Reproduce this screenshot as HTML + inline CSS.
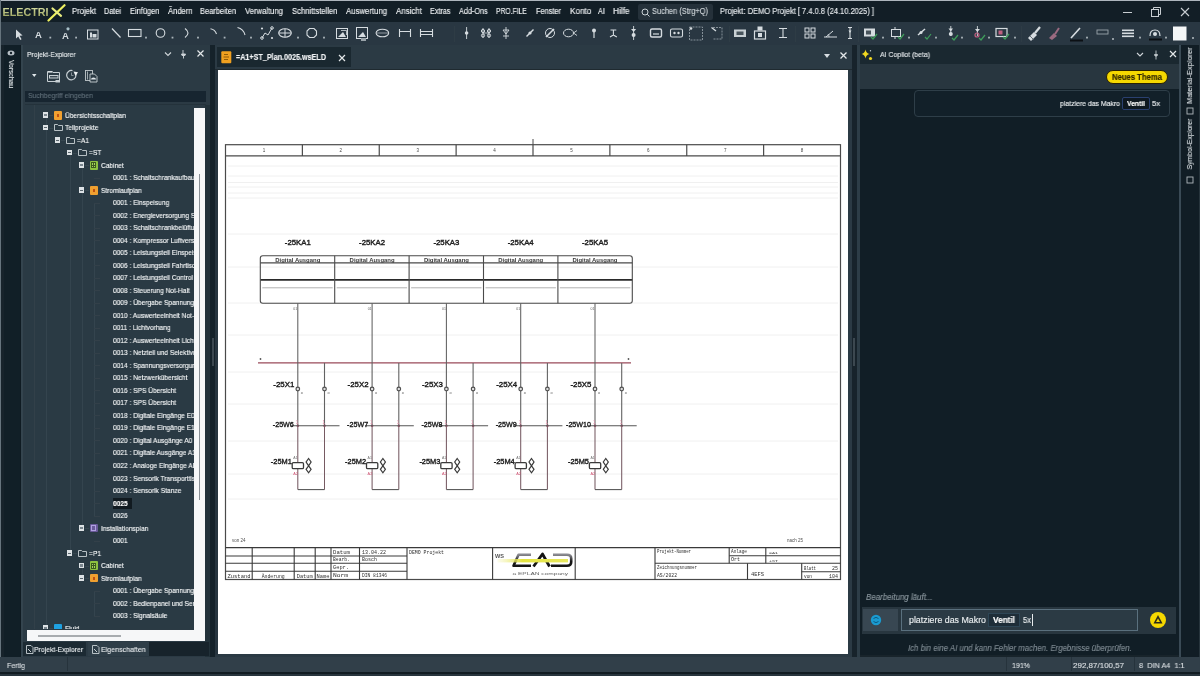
<!DOCTYPE html>
<html><head><meta charset="utf-8">
<style>
*{margin:0;padding:0;box-sizing:border-box}
html,body{width:1200px;height:676px;overflow:hidden;background:#1b262d;font-family:"Liberation Sans",sans-serif;color:#e6eaee;position:relative}
.a{position:absolute}
.t{position:absolute;white-space:pre;line-height:1;transform-origin:0 50%;will-change:transform;-webkit-text-stroke:0.15px currentColor}
svg{position:absolute;overflow:visible;will-change:transform}

</style></head><body>
<div class="a" style="left:0px;top:0px;width:1200px;height:676px;background:#18242b;"></div>
<div class="a" style="left:0px;top:0px;width:1200px;height:1px;background:#aeb6bd;"></div>
<div class="a" style="left:0px;top:0px;width:1px;height:676px;background:#66747d;"></div>
<div class="a" style="left:1px;top:1px;width:1199px;height:21px;background:#121e26;"></div>
<div class="a" style="left:1px;top:22px;width:1199px;height:23px;background:#293742;"></div>
<div class="a" style="left:1px;top:45px;width:3px;height:612px;background:#17232b;"></div>
<div class="a" style="left:4px;top:45px;width:16px;height:612px;background:#111f27;"></div>
<div class="a" style="left:20px;top:45px;width:1px;height:612px;background:#0f1b22;"></div>
<div class="a" style="left:21px;top:45px;width:2px;height:612px;background:#34444e;"></div>
<div class="a" style="left:23px;top:45px;width:187px;height:612px;background:#2b3a44;"></div>
<div class="a" style="left:205px;top:105px;width:5px;height:552px;background:#223139;"></div>
<div class="a" style="left:210px;top:45px;width:5px;height:612px;background:#15222a;"></div>
<div class="a" style="left:215px;top:45px;width:637px;height:612px;background:#2b3a44;"></div>
<div class="a" style="left:215px;top:70px;width:3px;height:585px;background:#27353f;"></div>
<div class="a" style="left:217px;top:47px;width:134px;height:20px;background:#1a2830;"></div>
<div class="a" style="left:218px;top:70px;width:630px;height:584px;background:#ffffff;"></div>
<div class="a" style="left:852px;top:45px;width:5px;height:613px;background:#17232b;"></div>
<div class="a" style="left:857px;top:45px;width:323px;height:19px;background:#1a2830;"></div>
<div class="a" style="left:857px;top:64px;width:323px;height:25px;background:#28363f;"></div>
<div class="a" style="left:857px;top:89px;width:322px;height:566px;background:#111e26;"></div>
<div class="a" style="left:857px;top:45px;width:3px;height:612px;background:#2d3d47;"></div>
<div class="a" style="left:1179px;top:45px;width:2px;height:612px;background:#3a4a55;"></div>
<div class="a" style="left:1181px;top:45px;width:19px;height:612px;background:#111d25;"></div>
<div class="a" style="left:1199px;top:45px;width:1px;height:612px;background:#27343c;"></div>
<div class="a" style="left:0px;top:657px;width:1200px;height:15px;background:#313f49;"></div>
<div class="a" style="left:0px;top:672px;width:1200px;height:2px;background:#111c22;"></div>
<div class="a" style="left:0px;top:674px;width:1200px;height:2px;background:#27343d;"></div>
<div class="a" style="left:638px;top:4px;width:75px;height:16px;background:#25313a;border-radius:2px"></div>
<svg style="left:641px;top:8px" width="9" height="9"><circle cx="4" cy="4" r="3" fill="none" stroke="#c8d0d4" stroke-width="1"/><line x1="6.2" y1="6.2" x2="8.5" y2="8.5" stroke="#c8d0d4" stroke-width="1"/></svg>
<div class="a" style="left:1123px;top:12px;width:9px;height:1px;background:#c8ced2;"></div>
<svg style="left:1151px;top:7px" width="10" height="10"><rect x="0.5" y="2.5" width="7" height="7" fill="none" stroke="#c8ced2"/><path d="M2.5 2.5V0.5H9.5V7.5H7.5" fill="none" stroke="#c8ced2"/></svg>
<svg style="left:1180px;top:7px" width="10" height="10"><path d="M1 1L9 9M9 1L1 9" stroke="#c8ced2" stroke-width="1.1"/></svg>
<svg style="left:2px;top:4px" width="66" height="18" viewBox="0 0 66 18">
<defs><linearGradient id="lg" x1="0" y1="0" x2="0" y2="1"><stop offset="0" stop-color="#dce4a8"/><stop offset="1" stop-color="#949c58"/></linearGradient></defs>
<text x="0.5" y="12.2" font-family="Liberation Sans" font-weight="bold" font-size="11.5" fill="url(#lg)" textLength="46" lengthAdjust="spacingAndGlyphs">ELECTRI</text>
<path d="M46.5 16.5L62.5 1.2" stroke="#eef060" stroke-width="2.2" stroke-linecap="round"/>
<path d="M50.5 4.5L59 11.8" stroke="#e8ec80" stroke-width="2.2" stroke-linecap="round"/>
</svg>
<div class="a" style="left:67px;top:657px;width:1px;height:14px;background:#26333c;"></div>
<div class="a" style="left:1006px;top:657px;width:1px;height:14px;background:#26333c;"></div>
<div class="a" style="left:1071px;top:657px;width:1px;height:14px;background:#26333c;"></div>
<div class="a" style="left:1134px;top:657px;width:1px;height:14px;background:#26333c;"></div>
<div class="a" style="left:453.5px;top:26px;width:1px;height:16px;background:#2e3c45;"></div>
<div class="a" style="left:729px;top:26px;width:1px;height:16px;background:#2e3c45;"></div>
<div class="a" style="left:795px;top:26px;width:1px;height:16px;background:#2e3c45;"></div>
<div class="a" style="left:858px;top:26px;width:1px;height:16px;background:#2e3c45;"></div>
<div class="a" style="left:1021px;top:26px;width:1px;height:16px;background:#2e3c45;"></div>
<svg style="left:0;top:22px" width="1200" height="23"><path d="M16 7.5L16 16.5L18.2 14.5L20.2 18L21.6 17.2L19.6 13.8L22.6 13.5Z" fill="#d6dce0"/><text x="35" y="15.6" font-family="Liberation Sans" font-weight="bold" font-size="9.5" fill="#d6dce0">A</text><rect x="49.4" y="14.7" width="1.8" height="1.8" fill="#aab4ba"/><text x="62" y="16.6" font-family="Liberation Sans" font-weight="bold" font-size="9.5" fill="#d6dce0">A</text><circle cx="68" cy="6.8" r="1.6" fill="#a8c0c8"/><rect x="75.19999999999999" y="14.7" width="1.8" height="1.8" fill="#aab4ba"/><rect x="87.5" y="8" width="10.5" height="9" fill="none" stroke="#d6dce0" stroke-width="1"/><rect x="90" y="10.5" width="2" height="5" fill="#d6dce0"/><rect x="92.5" y="12" width="4" height="3.5" fill="#d6dce0"/><path d="M112 6.5L120.5 15.5" stroke="#d6dce0" stroke-width="1.2"/><rect x="128.5" y="7.5" width="12.5" height="7" fill="none" stroke="#d6dce0" stroke-width="1.1"/><rect x="145.1" y="14.7" width="1.8" height="1.8" fill="#aab4ba"/><circle cx="160.5" cy="11" r="4.3" fill="none" stroke="#d6dce0" stroke-width="1.1"/><rect x="171.6" y="14.7" width="1.8" height="1.8" fill="#aab4ba"/><path d="M185 6.5Q191 11 185 15.5" fill="none" stroke="#d6dce0" stroke-width="1.1"/><rect x="197.1" y="14.7" width="1.8" height="1.8" fill="#aab4ba"/><path d="M210.5 6.8Q215 7.5 216.5 12" fill="none" stroke="#d6dce0" stroke-width="1.1"/><rect x="223.7" y="14.7" width="1.8" height="1.8" fill="#aab4ba"/><path d="M237.5 5.5Q243.5 7 245 13" fill="none" stroke="#d6dce0" stroke-width="1.1"/><rect x="250.1" y="14.7" width="1.8" height="1.8" fill="#aab4ba"/><path d="M262 16L265 11L268 13L272 6" fill="none" stroke="#d6dce0" stroke-width="1"/><circle cx="262" cy="16" r="1.3" fill="none" stroke="#d6dce0"/><circle cx="272" cy="6" r="1.3" fill="none" stroke="#d6dce0"/><circle cx="262" cy="6.5" r="1.1" fill="#d6dce0"/><circle cx="272" cy="16" r="1.1" fill="#d6dce0"/><ellipse cx="285" cy="11" rx="6.3" ry="4.2" fill="none" stroke="#d6dce0" stroke-width="1.1"/><path d="M278.7 11H291.3M285 6.8V15.2" stroke="#d6dce0" stroke-width="1"/><rect x="297.1" y="14.7" width="1.8" height="1.8" fill="#aab4ba"/><path d="M309.5 6.5H314L316.5 9V13L314 15.5H309.5L307 13V9Z" fill="none" stroke="#d6dce0" stroke-width="1.1"/><rect x="323.1" y="14.7" width="1.8" height="1.8" fill="#aab4ba"/><rect x="336.5" y="6.5" width="11" height="10" fill="none" stroke="#d6dce0" stroke-width="1"/><path d="M338 15L343 10L346 15Z" fill="#d6dce0"/><path d="M341 8.5L346.5 8.5L346.5 13" fill="none" stroke="#d6dce0" stroke-width="0.8"/><rect x="356.5" y="5.5" width="11" height="11" fill="none" stroke="#d6dce0" stroke-width="1"/><path d="M358 15L363 10L366 15Z" fill="#d6dce0"/><rect x="361" y="16" width="5" height="3" fill="#9aa4aa"/><ellipse cx="382.4" cy="11" rx="6.3" ry="3.8" fill="none" stroke="#d6dce0" stroke-width="1.1"/><path d="M377 11H388" stroke="#d6dce0" stroke-width="0.6"/><path d="M399.5 7V15M410.5 7V15M399.5 9.5H410.5" fill="none" stroke="#d6dce0" stroke-width="1.1"/><path d="M420.5 7V15M432.5 7V15M420.5 9.5H432.5M420.5 12.5H432.5" fill="none" stroke="#d6dce0" stroke-width="1.1"/><path d="M466.6 5V17" stroke="#d6dce0" stroke-width="0.9"/><circle cx="466.6" cy="11" r="1.8" fill="#d6dce0"/><path d="M483 6V16M489 6V16" stroke="#d6dce0" stroke-width="0.9"/><circle cx="483" cy="9" r="1.6" fill="none" stroke="#d6dce0"/><circle cx="489" cy="9" r="1.6" fill="none" stroke="#d6dce0"/><circle cx="483" cy="13.5" r="1.6" fill="none" stroke="#d6dce0"/><circle cx="489" cy="13.5" r="1.6" fill="none" stroke="#d6dce0"/><path d="M483 11L489 11" stroke="#d6dce0" stroke-width="0.8"/><path d="M506 5V17M503 8H509L506 12L503 8M503 14H509" fill="none" stroke="#d6dce0" stroke-width="0.9"/><path d="M526.5 14.5L533.5 7.5" stroke="#d6dce0" stroke-width="1.4"/><circle cx="530" cy="11" r="1.6" fill="#d6dce0"/><circle cx="550" cy="11" r="4.5" fill="none" stroke="#d6dce0" stroke-width="1"/><path d="M546 15L554 7" stroke="#d6dce0" stroke-width="1.6"/><ellipse cx="568.5" cy="11" rx="5" ry="3.8" fill="none" stroke="#d6dce0" stroke-width="1"/><path d="M573.5 11L577 8.5M573.5 11L577 13.5" stroke="#d6dce0" stroke-width="0.9"/><path d="M594 9V16" stroke="#d6dce0" stroke-width="1.2"/><circle cx="594" cy="8.5" r="2" fill="#d6dce0"/><path d="M613.4 8V13M610 15L613.4 13L616.8 15M610.5 8H616.3" fill="none" stroke="#d6dce0" stroke-width="1.1"/><path d="M633.6 4V18" stroke="#d6dce0" stroke-width="0.9"/><path d="M631 7L633.6 10L636.2 7Z" fill="#d6dce0"/><circle cx="633.6" cy="13" r="2" fill="#d6dce0"/><rect x="650.5" y="7" width="11" height="8" rx="1.5" fill="none" stroke="#d6dce0" stroke-width="1.4"/><path d="M653 12H659" stroke="#d6dce0" stroke-width="1.2"/><rect x="670.5" y="7" width="12" height="8" rx="1.5" fill="none" stroke="#d6dce0" stroke-width="1.1"/><circle cx="674.5" cy="11" r="1.2" fill="#d6dce0"/><circle cx="678.5" cy="11" r="1.2" fill="#d6dce0"/><rect x="689.5" y="5" width="13" height="13" fill="none" stroke="#8f9aa1" stroke-width="0.9" stroke-dasharray="2 1"/><circle cx="691" cy="6.5" r="1.3" fill="#d6dce0"/><path d="M713 5.5H722V17H713" fill="none" stroke="#8f9aa1" stroke-width="0.9" stroke-dasharray="2 1"/><path d="M711.5 5.5L716 9" stroke="#d6dce0" stroke-width="1.3"/><rect x="734" y="7.5" width="12" height="7.5" fill="#c8d0d4"/><rect x="736.5" y="9.5" width="7" height="3.5" fill="#48545c"/><rect x="754.5" y="9" width="11" height="8" fill="none" stroke="#d6dce0" stroke-width="1.2"/><rect x="757.5" y="4.5" width="5" height="4" fill="#d6dce0"/><rect x="758" y="11" width="4" height="4" fill="#d6dce0"/><path d="M779 6.5H787M783 6.5V15.5M779 15.5H787" fill="none" stroke="#d6dce0" stroke-width="1.1"/><rect x="805" y="6" width="4" height="4" fill="none" stroke="#d6dce0"/><rect x="811" y="6" width="4" height="4" fill="none" stroke="#d6dce0"/><rect x="805" y="12" width="4" height="4" fill="none" stroke="#d6dce0"/><rect x="811" y="12" width="4" height="4" fill="none" stroke="#d6dce0"/><path d="M824 15H837M826 15L833 9" fill="none" stroke="#d6dce0" stroke-width="1"/><path d="M829 15A4 4 0 0 0 828 12" fill="none" stroke="#d6dce0" stroke-width="0.8"/><path d="M850 5V17M848 5.5H852M848 16.5H852" fill="none" stroke="#d6dce0" stroke-width="1.1"/><path d="M848.5 8.5L851.5 8.5L850 11Z" fill="#d6dce0"/><rect x="864" y="6.5" width="11" height="8" fill="#d6dce0"/><rect x="866" y="8.5" width="5" height="4" fill="#48545c"/><path d="M871 15L873 17L877 12" fill="none" stroke="#3e9c5a" stroke-width="1.3"/><rect x="882.1" y="14.7" width="1.8" height="1.8" fill="#aab4ba"/><rect x="891.5" y="7.5" width="9" height="7" fill="none" stroke="#d6dce0" stroke-width="1"/><path d="M895 5V7.5M895 14.5V17" stroke="#d6dce0"/><path d="M898 15L900 17L904 12" fill="none" stroke="#3e9c5a" stroke-width="1.3"/><rect x="908.1" y="14.7" width="1.8" height="1.8" fill="#aab4ba"/><path d="M918 13L925 7" stroke="#d6dce0" stroke-width="1.5"/><circle cx="921" cy="10.5" r="1.5" fill="#d6dce0"/><path d="M925 15L927 17L931 12" fill="none" stroke="#3e9c5a" stroke-width="1.2"/><rect x="935.1" y="14.7" width="1.8" height="1.8" fill="#aab4ba"/><path d="M950.8 4V14" stroke="#d6dce0" stroke-width="0.9"/><path d="M948.5 6.5L953 6.5L950.8 9.5Z" fill="#d6dce0"/><circle cx="950.8" cy="12" r="2" fill="#d6dce0"/><path d="M952 16L954 18L958 13" fill="none" stroke="#3e9c5a" stroke-width="1.3"/><rect x="961.1" y="14.7" width="1.8" height="1.8" fill="#aab4ba"/><path d="M977.4 4V14" stroke="#d6dce0" stroke-width="0.9"/><path d="M975 7L980 7L977.4 10Z" fill="#d6dce0"/><circle cx="977" cy="13" r="2" fill="none" stroke="#c06080" stroke-width="1.2"/><path d="M979 16L981 18L985 13" fill="none" stroke="#3e9c5a" stroke-width="1.3"/><rect x="988.1" y="14.7" width="1.8" height="1.8" fill="#aab4ba"/><rect x="996" y="6.5" width="11" height="8" fill="none" stroke="#d6dce0" stroke-width="1.2"/><rect x="998.5" y="8.5" width="4" height="4" fill="#c06080"/><path d="M1003 15L1005 17L1009 12" fill="none" stroke="#3e9c5a" stroke-width="1.3"/><rect x="1014.1" y="14.7" width="1.8" height="1.8" fill="#aab4ba"/><path d="M1028 16L1034 10L1037 13L1031 19Z" fill="#d6dce0"/><path d="M1035 11L1040 5" stroke="#d6dce0" stroke-width="2.2"/><path d="M1030 14L1034 18" stroke="#48545c" stroke-width="0.8"/><path d="M1049 16L1054 11L1057 14L1052 18Z" fill="#9a6a80"/><path d="M1055 12L1059 6" stroke="#9a6a80" stroke-width="2"/><path d="M1071 16L1080 6" stroke="#d6dce0" stroke-width="1.6"/><rect x="1070" y="17.5" width="13" height="2" fill="#0c1014"/><rect x="1086.1" y="14.7" width="1.8" height="1.8" fill="#aab4ba"/><rect x="1097" y="8" width="11" height="4" fill="none" stroke="#9aa4aa" stroke-width="0.9"/><rect x="1112.1" y="16.1" width="1.8" height="1.8" fill="#aab4ba"/><rect x="1122" y="7.5" width="12" height="1.6" fill="#d6dce0"/><rect x="1122" y="10.5" width="12" height="1.6" fill="#d6dce0"/><rect x="1122" y="13.5" width="12" height="1.6" fill="#d6dce0"/><rect x="1139.1" y="14.7" width="1.8" height="1.8" fill="#aab4ba"/><path d="M1150 14Q1150 8 1155 8Q1160 8 1160 14" fill="none" stroke="#d6dce0" stroke-width="1.2"/><circle cx="1155" cy="12" r="2" fill="#d6dce0"/><rect x="1149" y="16.5" width="13" height="2" fill="#0c1014"/><rect x="1165.1" y="14.7" width="1.8" height="1.8" fill="#aab4ba"/><rect x="1173" y="4.5" width="13.5" height="14" fill="#f4f6f7"/><rect x="1192.1" y="15.1" width="1.8" height="1.8" fill="#aab4ba"/></svg>
<svg style="left:6px;top:48px" width="10" height="10"><ellipse cx="5" cy="5" rx="3.5" ry="2.5" fill="#b8c0c6"/><circle cx="5" cy="5" r="1.2" fill="#16222a"/></svg>
<div class="t" style="left:6.8px;top:60px;font-size:7.5px;color:#dde2e5;writing-mode:vertical-rl;transform:scaleY(0.9);transform-origin:0 0">Vorschau</div>
<svg style="left:160px;top:48px" width="48" height="12"><path d="M5 4.5L8 7.5L11 4.5" fill="none" stroke="#d0d6da" stroke-width="1.1"/><path d="M23 2V6M21.5 6H25.5L25 7.5H22ZM23.5 7.5V10.5" fill="#d0d6da" stroke="#d0d6da" stroke-width="0.9"/><path d="M37.5 2.5L43.5 8.5M43.5 2.5L37.5 8.5" stroke="#e4e8ea" stroke-width="1.2"/></svg>
<svg style="left:28px;top:68px" width="80" height="16">
<path d="M4 6H8.5L6.25 9Z" fill="#e0e6ea"/>
<path d="M19.5 3.5H24L25 4.5H31.5V13.5H19.5Z" fill="none" stroke="#c8d0d4" stroke-width="1"/><rect x="20" y="3" width="4.5" height="1.6" fill="#d8dee2"/><rect x="21" y="7" width="9.5" height="3.5" fill="#c8d0d4"/><rect x="22" y="8" width="7.5" height="1.5" fill="#3a4852"/><rect x="27.5" y="12" width="4.5" height="2.5" fill="#c8d0d4"/>
<path d="M47.6 5.2A4.7 4.7 0 1 1 44.5 2.6" fill="none" stroke="#c8d0d4" stroke-width="1.2"/><path d="M45.5 3.5L50 4.2L47.5 8Z" fill="#eef1f3"/><path d="M43.5 4.5V7.5H45.5" fill="none" stroke="#9aa4aa" stroke-width="0.8"/>
<rect x="57.5" y="2.5" width="7" height="10" fill="none" stroke="#c0c8cc" stroke-width="0.9"/><path d="M59.5 3.5V11.5" stroke="#c0c8cc" stroke-width="0.8"/><path d="M62 6H66.5L69 8.5V14H62Z" fill="#2b3a44" stroke="#c8d0d4" stroke-width="0.9"/><path d="M63 11.5A2.5 2 0 0 1 68 11.5Z" fill="#e0e6ea"/>
</svg>
<div class="a" style="left:25px;top:91px;width:181px;height:11px;background:#172530;"></div>
<div class="a" style="left:25px;top:104px;width:181px;height:1px;background:#24323b;"></div>
<div class="a" style="left:25px;top:105px;width:169px;height:524px;overflow:hidden;background:#2a3a44"><div class="a" style="left:9px;top:0px;width:1px;height:524px;background:#324049"></div><div class="a" style="left:20.5px;top:10.200000000000003px;width:1px;height:512.91px;background:#34444e"></div><div class="a" style="left:44.5px;top:47.73000000000002px;width:1px;height:400.31999999999994px;background:#34444e"></div><div class="a" style="left:56.5px;top:60.24000000000001px;width:1px;height:362.78999999999996px;background:#34444e"></div><div class="a" style="left:56.5px;top:460.56000000000006px;width:1px;height:12.509999999999991px;background:#34444e"></div><div class="a" style="left:68.5px;top:72.75px;width:1px;height:1.0px;background:#34444e"></div><div class="a" style="left:68.5px;top:97.76999999999998px;width:1px;height:312.75px;background:#34444e"></div><div class="a" style="left:68.5px;top:485.58000000000004px;width:1px;height:25.019999999999982px;background:#34444e"></div><div class="a" style="left:23.5px;top:10.200000000000003px;width:4px;height:1px;background:#36464f"></div><div class="a" style="left:17.9px;top:7.400000000000006px;width:5.4px;height:5.4px;background:#dde2e5"></div><div class="a" style="left:19.299999999999997px;top:9.0px;width:2.4px;height:2.4px;background:#7a868e"></div><div class="a" style="left:29.0px;top:6.0px;width:7.5px;height:8.5px;background:#f0a030;border-radius:1px"></div><div class="a" style="left:31.799999999999997px;top:8.700000000000003px;width:2px;height:3px;background:#c05010"></div><div class="a" style="left:23.5px;top:22.710000000000008px;width:4px;height:1px;background:#36464f"></div><div class="a" style="left:17.9px;top:19.91000000000001px;width:5.4px;height:5.4px;background:#dde2e5"></div><div class="a" style="left:18.9px;top:22.210000000000008px;width:3.4px;height:1px;background:#5a666e"></div><svg style="left:28.799999999999997px;top:19.210000000000008px" width="9" height="7"><path d="M0.5 0.5H3.5L4.5 1.5H8.5V6.5H0.5Z" fill="none" stroke="#c8d0d4" stroke-width="0.9"/></svg><div class="a" style="left:35.5px;top:35.22px;width:4px;height:1px;background:#36464f"></div><div class="a" style="left:29.9px;top:32.41999999999999px;width:5.4px;height:5.4px;background:#dde2e5"></div><div class="a" style="left:30.9px;top:34.72px;width:3.4px;height:1px;background:#5a666e"></div><svg style="left:40.8px;top:31.72px" width="9" height="7"><path d="M0.5 0.5H3.5L4.5 1.5H8.5V6.5H0.5Z" fill="none" stroke="#c8d0d4" stroke-width="0.9"/></svg><div class="a" style="left:47.5px;top:47.73000000000002px;width:4px;height:1px;background:#36464f"></div><div class="a" style="left:41.900000000000006px;top:44.93000000000001px;width:5.4px;height:5.4px;background:#dde2e5"></div><div class="a" style="left:42.900000000000006px;top:47.23000000000002px;width:3.4px;height:1px;background:#5a666e"></div><svg style="left:52.8px;top:44.23000000000002px" width="9" height="7"><path d="M0.5 0.5H3.5L4.5 1.5H8.5V6.5H0.5Z" fill="none" stroke="#c8d0d4" stroke-width="0.9"/></svg><div class="a" style="left:59.5px;top:60.24000000000001px;width:4px;height:1px;background:#36464f"></div><div class="a" style="left:53.900000000000006px;top:57.44px;width:5.4px;height:5.4px;background:#dde2e5"></div><div class="a" style="left:55.3px;top:59.04000000000002px;width:2.4px;height:2.4px;background:#7a868e"></div><div class="a" style="left:65.0px;top:56.04000000000002px;width:7.5px;height:8.5px;background:#8cc040;border-radius:1px"></div><div class="a" style="left:66.3px;top:57.24000000000001px;width:5px;height:6px;border:1px solid #3c5a20;background:#a8d060"></div><div class="a" style="left:68.3px;top:57.24000000000001px;width:1px;height:6px;background:#3c5a20"></div><div class="a" style="left:66.3px;top:59.74000000000001px;width:5px;height:1px;background:#3c5a20"></div><div class="a" style="left:68.5px;top:72.75px;width:6px;height:1px;background:#334049"></div><div class="a" style="left:59.5px;top:85.25999999999999px;width:4px;height:1px;background:#36464f"></div><div class="a" style="left:53.900000000000006px;top:82.45999999999998px;width:5.4px;height:5.4px;background:#dde2e5"></div><div class="a" style="left:54.900000000000006px;top:84.75999999999999px;width:3.4px;height:1px;background:#5a666e"></div><div class="a" style="left:65.0px;top:81.06px;width:7.5px;height:8.5px;background:#f0a030;border-radius:1px"></div><div class="a" style="left:67.8px;top:83.75999999999999px;width:2px;height:3px;background:#c05010"></div><div class="a" style="left:68.5px;top:97.76999999999998px;width:6px;height:1px;background:#334049"></div><div class="a" style="left:68.5px;top:110.28px;width:6px;height:1px;background:#334049"></div><div class="a" style="left:68.5px;top:122.79000000000002px;width:6px;height:1px;background:#334049"></div><div class="a" style="left:68.5px;top:135.3px;width:6px;height:1px;background:#334049"></div><div class="a" style="left:68.5px;top:147.81px;width:6px;height:1px;background:#334049"></div><div class="a" style="left:68.5px;top:160.32px;width:6px;height:1px;background:#334049"></div><div class="a" style="left:68.5px;top:172.82999999999998px;width:6px;height:1px;background:#334049"></div><div class="a" style="left:68.5px;top:185.33999999999997px;width:6px;height:1px;background:#334049"></div><div class="a" style="left:68.5px;top:197.85000000000002px;width:6px;height:1px;background:#334049"></div><div class="a" style="left:68.5px;top:210.36px;width:6px;height:1px;background:#334049"></div><div class="a" style="left:68.5px;top:222.87px;width:6px;height:1px;background:#334049"></div><div class="a" style="left:68.5px;top:235.38px;width:6px;height:1px;background:#334049"></div><div class="a" style="left:68.5px;top:247.89px;width:6px;height:1px;background:#334049"></div><div class="a" style="left:68.5px;top:260.4px;width:6px;height:1px;background:#334049"></div><div class="a" style="left:68.5px;top:272.90999999999997px;width:6px;height:1px;background:#334049"></div><div class="a" style="left:68.5px;top:285.41999999999996px;width:6px;height:1px;background:#334049"></div><div class="a" style="left:68.5px;top:297.93px;width:6px;height:1px;background:#334049"></div><div class="a" style="left:68.5px;top:310.44px;width:6px;height:1px;background:#334049"></div><div class="a" style="left:68.5px;top:322.95px;width:6px;height:1px;background:#334049"></div><div class="a" style="left:68.5px;top:335.46px;width:6px;height:1px;background:#334049"></div><div class="a" style="left:68.5px;top:347.96999999999997px;width:6px;height:1px;background:#334049"></div><div class="a" style="left:68.5px;top:360.47999999999996px;width:6px;height:1px;background:#334049"></div><div class="a" style="left:68.5px;top:372.99px;width:6px;height:1px;background:#334049"></div><div class="a" style="left:68.5px;top:385.5px;width:6px;height:1px;background:#334049"></div><div class="a" style="left:68.5px;top:398.01px;width:6px;height:1px;background:#334049"></div><div class="a" style="left:87.5px;top:392.51px;width:19px;height:11px;background:#111a20"></div><div class="a" style="left:68.5px;top:410.52px;width:6px;height:1px;background:#334049"></div><div class="a" style="left:59.5px;top:423.03px;width:4px;height:1px;background:#36464f"></div><div class="a" style="left:53.900000000000006px;top:420.23px;width:5.4px;height:5.4px;background:#dde2e5"></div><div class="a" style="left:55.3px;top:421.8299999999999px;width:2.4px;height:2.4px;background:#7a868e"></div><div class="a" style="left:65.0px;top:418.8299999999999px;width:7.5px;height:8.5px;background:#6a5a9a;border-radius:1px"></div><div class="a" style="left:66.3px;top:420.03px;width:5px;height:6px;border:1px solid #b0a0e0"></div><div class="a" style="left:68.5px;top:435.53999999999996px;width:6px;height:1px;background:#334049"></div><div class="a" style="left:47.5px;top:448.04999999999995px;width:4px;height:1px;background:#36464f"></div><div class="a" style="left:41.900000000000006px;top:445.25px;width:5.4px;height:5.4px;background:#dde2e5"></div><div class="a" style="left:42.900000000000006px;top:447.54999999999995px;width:3.4px;height:1px;background:#5a666e"></div><svg style="left:52.8px;top:444.54999999999995px" width="9" height="7"><path d="M0.5 0.5H3.5L4.5 1.5H8.5V6.5H0.5Z" fill="none" stroke="#c8d0d4" stroke-width="0.9"/></svg><div class="a" style="left:59.5px;top:460.56000000000006px;width:4px;height:1px;background:#36464f"></div><div class="a" style="left:53.900000000000006px;top:457.7600000000001px;width:5.4px;height:5.4px;background:#dde2e5"></div><div class="a" style="left:55.3px;top:459.36px;width:2.4px;height:2.4px;background:#7a868e"></div><div class="a" style="left:65.0px;top:456.36px;width:7.5px;height:8.5px;background:#8cc040;border-radius:1px"></div><div class="a" style="left:66.3px;top:457.56000000000006px;width:5px;height:6px;border:1px solid #3c5a20;background:#a8d060"></div><div class="a" style="left:68.3px;top:457.56000000000006px;width:1px;height:6px;background:#3c5a20"></div><div class="a" style="left:66.3px;top:460.06000000000006px;width:5px;height:1px;background:#3c5a20"></div><div class="a" style="left:59.5px;top:473.07000000000005px;width:4px;height:1px;background:#36464f"></div><div class="a" style="left:53.900000000000006px;top:470.2700000000001px;width:5.4px;height:5.4px;background:#dde2e5"></div><div class="a" style="left:54.900000000000006px;top:472.57000000000005px;width:3.4px;height:1px;background:#5a666e"></div><div class="a" style="left:65.0px;top:468.87px;width:7.5px;height:8.5px;background:#f0a030;border-radius:1px"></div><div class="a" style="left:67.8px;top:471.57000000000005px;width:2px;height:3px;background:#c05010"></div><div class="a" style="left:68.5px;top:485.58000000000004px;width:6px;height:1px;background:#334049"></div><div class="a" style="left:68.5px;top:498.09000000000003px;width:6px;height:1px;background:#334049"></div><div class="a" style="left:68.5px;top:510.6px;width:6px;height:1px;background:#334049"></div><div class="a" style="left:23.5px;top:523.11px;width:4px;height:1px;background:#36464f"></div><div class="a" style="left:17.9px;top:520.3100000000001px;width:5.4px;height:5.4px;background:#dde2e5"></div><div class="a" style="left:19.299999999999997px;top:521.91px;width:2.4px;height:2.4px;background:#7a868e"></div><div class="a" style="left:29.0px;top:518.91px;width:7.5px;height:8.5px;background:#1ea0e0;border-radius:1px"></div><div class="t" style="left:40.0px;top:6.73px;font-size:7.5px;color:#f4f6f7;transform:scaleX(0.88);">Übersichtsschaltplan</div><div class="t" style="left:40.0px;top:19.24px;font-size:7.5px;color:#f4f6f7;transform:scaleX(0.88);">Teilprojekte</div><div class="t" style="left:52.0px;top:31.74px;font-size:7.5px;color:#f4f6f7;transform:scaleX(0.88);">=A1</div><div class="t" style="left:64.0px;top:44.26px;font-size:7.5px;color:#f4f6f7;transform:scaleX(0.88);">=ST</div><div class="t" style="left:76.0px;top:56.77px;font-size:7.5px;color:#f4f6f7;transform:scaleX(0.88);">Cabinet</div><div class="t" style="left:88px;top:69.27px;font-size:7.5px;color:#f4f6f7;transform:scaleX(0.88);">0001 : Schaltschrankaufbau</div><div class="t" style="left:76.0px;top:81.78px;font-size:7.5px;color:#f4f6f7;transform:scaleX(0.88);">Stromlaufplan</div><div class="t" style="left:88px;top:94.29px;font-size:7.5px;color:#f4f6f7;transform:scaleX(0.88);">0001 : Einspeisung</div><div class="t" style="left:88px;top:106.80px;font-size:7.5px;color:#f4f6f7;transform:scaleX(0.88);">0002 : Energieversorgung Schaltschrank</div><div class="t" style="left:88px;top:119.32px;font-size:7.5px;color:#f4f6f7;transform:scaleX(0.88);">0003 : Schaltschrankbelüftung</div><div class="t" style="left:88px;top:131.82px;font-size:7.5px;color:#f4f6f7;transform:scaleX(0.88);">0004 : Kompressor Luftversorgung</div><div class="t" style="left:88px;top:144.33px;font-size:7.5px;color:#f4f6f7;transform:scaleX(0.88);">0005 : Leistungsteil Einspeisung</div><div class="t" style="left:88px;top:156.84px;font-size:7.5px;color:#f4f6f7;transform:scaleX(0.88);">0006 : Leistungsteil Fahrtisch</div><div class="t" style="left:88px;top:169.35px;font-size:7.5px;color:#f4f6f7;transform:scaleX(0.88);">0007 : Leistungsteil Control</div><div class="t" style="left:88px;top:181.86px;font-size:7.5px;color:#f4f6f7;transform:scaleX(0.88);">0008 : Steuerung Not-Halt</div><div class="t" style="left:88px;top:194.38px;font-size:7.5px;color:#f4f6f7;transform:scaleX(0.88);">0009 : Übergabe Spannung</div><div class="t" style="left:88px;top:206.88px;font-size:7.5px;color:#f4f6f7;transform:scaleX(0.88);">0010 : Auswerteeinheit Not-Halt</div><div class="t" style="left:88px;top:219.39px;font-size:7.5px;color:#f4f6f7;transform:scaleX(0.88);">0011 : Lichtvorhang</div><div class="t" style="left:88px;top:231.90px;font-size:7.5px;color:#f4f6f7;transform:scaleX(0.88);">0012 : Auswerteeinheit Lichtvorhang</div><div class="t" style="left:88px;top:244.41px;font-size:7.5px;color:#f4f6f7;transform:scaleX(0.88);">0013 : Netzteil und Selektivmodul</div><div class="t" style="left:88px;top:256.92px;font-size:7.5px;color:#f4f6f7;transform:scaleX(0.88);">0014 : Spannungsversorgung</div><div class="t" style="left:88px;top:269.43px;font-size:7.5px;color:#f4f6f7;transform:scaleX(0.88);">0015 : Netzwerkübersicht</div><div class="t" style="left:88px;top:281.94px;font-size:7.5px;color:#f4f6f7;transform:scaleX(0.88);">0016 : SPS Übersicht</div><div class="t" style="left:88px;top:294.45px;font-size:7.5px;color:#f4f6f7;transform:scaleX(0.88);">0017 : SPS Übersicht</div><div class="t" style="left:88px;top:306.96px;font-size:7.5px;color:#f4f6f7;transform:scaleX(0.88);">0018 : Digitale Eingänge E0</div><div class="t" style="left:88px;top:319.47px;font-size:7.5px;color:#f4f6f7;transform:scaleX(0.88);">0019 : Digitale Eingänge E1</div><div class="t" style="left:88px;top:331.98px;font-size:7.5px;color:#f4f6f7;transform:scaleX(0.88);">0020 : Digital Ausgänge A0</div><div class="t" style="left:88px;top:344.49px;font-size:7.5px;color:#f4f6f7;transform:scaleX(0.88);">0021 : Digitale Ausgänge A1</div><div class="t" style="left:88px;top:357.00px;font-size:7.5px;color:#f4f6f7;transform:scaleX(0.88);">0022 : Analoge Eingänge AE</div><div class="t" style="left:88px;top:369.51px;font-size:7.5px;color:#f4f6f7;transform:scaleX(0.88);">0023 : Sensorik Transporttisch</div><div class="t" style="left:88px;top:382.02px;font-size:7.5px;color:#f4f6f7;transform:scaleX(0.88);">0024 : Sensorik Stanze</div><div class="t" style="left:88px;top:394.53px;font-size:7.5px;color:#ffffff;transform:scaleX(0.88);font-weight:bold;">0025</div><div class="t" style="left:88px;top:407.04px;font-size:7.5px;color:#f4f6f7;transform:scaleX(0.88);">0026</div><div class="t" style="left:76.0px;top:419.56px;font-size:7.5px;color:#f4f6f7;transform:scaleX(0.88);">Installationsplan</div><div class="t" style="left:88px;top:432.06px;font-size:7.5px;color:#f4f6f7;transform:scaleX(0.88);">0001</div><div class="t" style="left:64.0px;top:444.57px;font-size:7.5px;color:#f4f6f7;transform:scaleX(0.88);">=P1</div><div class="t" style="left:76.0px;top:457.09px;font-size:7.5px;color:#f4f6f7;transform:scaleX(0.88);">Cabinet</div><div class="t" style="left:76.0px;top:469.60px;font-size:7.5px;color:#f4f6f7;transform:scaleX(0.88);">Stromlaufplan</div><div class="t" style="left:88px;top:482.11px;font-size:7.5px;color:#f4f6f7;transform:scaleX(0.88);">0001 : Übergabe Spannung</div><div class="t" style="left:88px;top:494.62px;font-size:7.5px;color:#f4f6f7;transform:scaleX(0.88);">0002 : Bedienpanel und Sensorik</div><div class="t" style="left:88px;top:507.13px;font-size:7.5px;color:#f4f6f7;transform:scaleX(0.88);">0003 : Signalsäule</div><div class="t" style="left:40.0px;top:519.64px;font-size:7.5px;color:#f4f6f7;transform:scaleX(0.88);">Fluid</div></div>
<div class="a" style="left:194px;top:108px;width:10.5px;height:522px;background:#f6f7f8;"></div>
<div class="a" style="left:199px;top:174px;width:1px;height:326px;background:#8a9096;"></div>
<div class="a" style="left:26.5px;top:629.6px;width:178.5px;height:11px;background:#f6f7f8;"></div>
<div class="a" style="left:38px;top:635px;width:83px;height:2px;background:#a8acaf;"></div>
<div class="a" style="left:23px;top:642px;width:63px;height:14px;background:#1c2a33;"></div>
<div class="a" style="left:87.7px;top:642px;width:61.3px;height:14px;background:#2f3e48;"></div>
<div class="a" style="left:149px;top:642px;width:59.5px;height:14px;background:#17232b;"></div>
<svg style="left:25px;top:645px" width="10" height="10"><path d="M1.5 0.5H6L8 2.5V8.5H1.5Z" fill="none" stroke="#c8d0d4" stroke-width="0.9"/><path d="M3 4L6 7" stroke="#c8d0d4"/></svg>
<svg style="left:91px;top:645px" width="10" height="10"><path d="M1.5 0.5H6L8 2.5V8.5H1.5Z" fill="none" stroke="#c8d0d4" stroke-width="0.9"/><path d="M3 4L6 7" stroke="#c8d0d4"/></svg>
<svg style="left:221px;top:51px" width="11" height="13"><rect x="0.3" y="0.3" width="10" height="12" rx="1" fill="#f0a020"/><path d="M3 3.5H7M2.5 6H8M3 8.5H7" stroke="#7a4a00" stroke-width="0.8"/></svg>
<svg style="left:338px;top:54px" width="8" height="8"><path d="M1 1L7 7M7 1L1 7" stroke="#e4e8ea" stroke-width="1.2"/></svg>
<div class="a" style="left:215px;top:67px;width:637px;height:2px;background:#2b3a44;"></div>
<div class="a" style="left:215px;top:69px;width:637px;height:1px;background:#1f2a30;"></div>
<svg style="left:822px;top:51px" width="30" height="10"><path d="M2 3H8L5 7Z" fill="#d8dee2"/><path d="M18.5 1.5L24.5 7.5M24.5 1.5L18.5 7.5" stroke="#e4e8ea" stroke-width="1.3"/></svg>
<div class="a" style="left:212px;top:338px;width:2px;height:28px;background:#3c4850;"></div>
<div class="a" style="left:853px;top:338px;width:2px;height:28px;background:#3c4850;"></div>
<svg style="left:218px;top:70px" width="630" height="584" viewBox="218 70 630 584"><line x1="228" y1="166" x2="838" y2="166" stroke="#f0f0f0" stroke-width="1"/><line x1="228" y1="176" x2="838" y2="176" stroke="#f0f0f0" stroke-width="1"/><line x1="228" y1="182.5" x2="838" y2="182.5" stroke="#f0f0f0" stroke-width="1"/><line x1="228" y1="187" x2="838" y2="187" stroke="#f0f0f0" stroke-width="1"/><line x1="228" y1="193" x2="838" y2="193" stroke="#f0f0f0" stroke-width="1"/><line x1="228" y1="198" x2="838" y2="198" stroke="#f0f0f0" stroke-width="1"/><line x1="228" y1="234" x2="838" y2="234" stroke="#f0f0f0" stroke-width="1"/><line x1="228" y1="267" x2="838" y2="267" stroke="#f0f0f0" stroke-width="1"/><line x1="228" y1="303" x2="838" y2="303" stroke="#f0f0f0" stroke-width="1"/><line x1="228" y1="335" x2="838" y2="335" stroke="#f0f0f0" stroke-width="1"/><line x1="228" y1="372" x2="838" y2="372" stroke="#f0f0f0" stroke-width="1"/><line x1="228" y1="404" x2="838" y2="404" stroke="#f0f0f0" stroke-width="1"/><line x1="228" y1="441" x2="838" y2="441" stroke="#f0f0f0" stroke-width="1"/><line x1="228" y1="474" x2="838" y2="474" stroke="#f0f0f0" stroke-width="1"/><line x1="228" y1="499" x2="838" y2="499" stroke="#f0f0f0" stroke-width="1"/><rect x="225.5" y="144.7" width="615" height="434.8" fill="none" stroke="#4a4a4a" stroke-width="1.2"/><line x1="225.5" y1="155.9" x2="840.5" y2="155.9" stroke="#4a4a4a" stroke-width="1.2"/><line x1="302.38" y1="144.7" x2="302.38" y2="155.9" stroke="#4a4a4a" stroke-width="1.2"/><line x1="379.25" y1="144.7" x2="379.25" y2="155.9" stroke="#4a4a4a" stroke-width="1.2"/><line x1="456.12" y1="144.7" x2="456.12" y2="155.9" stroke="#4a4a4a" stroke-width="1.2"/><line x1="533.00" y1="144.7" x2="533.00" y2="155.9" stroke="#4a4a4a" stroke-width="1.2"/><line x1="609.88" y1="144.7" x2="609.88" y2="155.9" stroke="#4a4a4a" stroke-width="1.2"/><line x1="686.75" y1="144.7" x2="686.75" y2="155.9" stroke="#4a4a4a" stroke-width="1.2"/><line x1="763.62" y1="144.7" x2="763.62" y2="155.9" stroke="#4a4a4a" stroke-width="1.2"/><text x="263.94" y="152.3" font-family="Liberation Sans" font-size="4.5" fill="#444" text-anchor="middle">1</text><text x="340.81" y="152.3" font-family="Liberation Sans" font-size="4.5" fill="#444" text-anchor="middle">2</text><text x="417.69" y="152.3" font-family="Liberation Sans" font-size="4.5" fill="#444" text-anchor="middle">3</text><text x="494.56" y="152.3" font-family="Liberation Sans" font-size="4.5" fill="#444" text-anchor="middle">4</text><text x="571.44" y="152.3" font-family="Liberation Sans" font-size="4.5" fill="#444" text-anchor="middle">5</text><text x="648.31" y="152.3" font-family="Liberation Sans" font-size="4.5" fill="#444" text-anchor="middle">6</text><text x="725.19" y="152.3" font-family="Liberation Sans" font-size="4.5" fill="#444" text-anchor="middle">7</text><text x="802.06" y="152.3" font-family="Liberation Sans" font-size="4.5" fill="#444" text-anchor="middle">8</text><line x1="533" y1="139" x2="533" y2="145" stroke="#4a4a4a" stroke-width="1"/><text x="297.80" y="244.7" font-family="Liberation Sans" font-size="8" fill="#1e1e1e" stroke="#1e1e1e" stroke-width="0.4" text-anchor="middle" textLength="26" lengthAdjust="spacingAndGlyphs">-25KA1</text><text x="297.80" y="261.6" font-family="Liberation Sans" font-weight="bold" font-size="5.6" fill="#3a3a3a" text-anchor="middle" textLength="45" lengthAdjust="spacingAndGlyphs">Digital Ausgang</text><text x="295.30" y="309.5" font-family="Liberation Sans" font-size="3.5" fill="#606060" text-anchor="middle">01</text><line x1="260.30" y1="262.9" x2="334.70" y2="262.9" stroke="#4a4a4a" stroke-width="1.1"/><line x1="260.30" y1="279.8" x2="334.70" y2="279.8" stroke="#2a2a2a" stroke-width="1.7"/><line x1="262.30" y1="287.8" x2="332.70" y2="287.8" stroke="#a8a8a8" stroke-width="0.9"/><text x="372.10" y="244.7" font-family="Liberation Sans" font-size="8" fill="#1e1e1e" stroke="#1e1e1e" stroke-width="0.4" text-anchor="middle" textLength="26" lengthAdjust="spacingAndGlyphs">-25KA2</text><text x="372.10" y="261.6" font-family="Liberation Sans" font-weight="bold" font-size="5.6" fill="#3a3a3a" text-anchor="middle" textLength="45" lengthAdjust="spacingAndGlyphs">Digital Ausgang</text><text x="369.60" y="309.5" font-family="Liberation Sans" font-size="3.5" fill="#606060" text-anchor="middle">01</text><line x1="334.70" y1="262.9" x2="409.10" y2="262.9" stroke="#4a4a4a" stroke-width="1.1"/><line x1="334.70" y1="279.8" x2="409.10" y2="279.8" stroke="#2a2a2a" stroke-width="1.7"/><line x1="336.70" y1="287.8" x2="407.10" y2="287.8" stroke="#a8a8a8" stroke-width="0.9"/><line x1="334.70" y1="255.7" x2="334.70" y2="303.3" stroke="#4a4a4a" stroke-width="1.1"/><text x="446.40" y="244.7" font-family="Liberation Sans" font-size="8" fill="#1e1e1e" stroke="#1e1e1e" stroke-width="0.4" text-anchor="middle" textLength="26" lengthAdjust="spacingAndGlyphs">-25KA3</text><text x="446.40" y="261.6" font-family="Liberation Sans" font-weight="bold" font-size="5.6" fill="#3a3a3a" text-anchor="middle" textLength="45" lengthAdjust="spacingAndGlyphs">Digital Ausgang</text><text x="443.90" y="309.5" font-family="Liberation Sans" font-size="3.5" fill="#606060" text-anchor="middle">01</text><line x1="409.10" y1="262.9" x2="483.50" y2="262.9" stroke="#4a4a4a" stroke-width="1.1"/><line x1="409.10" y1="279.8" x2="483.50" y2="279.8" stroke="#2a2a2a" stroke-width="1.7"/><line x1="411.10" y1="287.8" x2="481.50" y2="287.8" stroke="#a8a8a8" stroke-width="0.9"/><line x1="409.10" y1="255.7" x2="409.10" y2="303.3" stroke="#4a4a4a" stroke-width="1.1"/><text x="520.70" y="244.7" font-family="Liberation Sans" font-size="8" fill="#1e1e1e" stroke="#1e1e1e" stroke-width="0.4" text-anchor="middle" textLength="26" lengthAdjust="spacingAndGlyphs">-25KA4</text><text x="520.70" y="261.6" font-family="Liberation Sans" font-weight="bold" font-size="5.6" fill="#3a3a3a" text-anchor="middle" textLength="45" lengthAdjust="spacingAndGlyphs">Digital Ausgang</text><text x="518.20" y="309.5" font-family="Liberation Sans" font-size="3.5" fill="#606060" text-anchor="middle">01</text><line x1="483.50" y1="262.9" x2="557.90" y2="262.9" stroke="#4a4a4a" stroke-width="1.1"/><line x1="483.50" y1="279.8" x2="557.90" y2="279.8" stroke="#2a2a2a" stroke-width="1.7"/><line x1="485.50" y1="287.8" x2="555.90" y2="287.8" stroke="#a8a8a8" stroke-width="0.9"/><line x1="483.50" y1="255.7" x2="483.50" y2="303.3" stroke="#4a4a4a" stroke-width="1.1"/><text x="595.00" y="244.7" font-family="Liberation Sans" font-size="8" fill="#1e1e1e" stroke="#1e1e1e" stroke-width="0.4" text-anchor="middle" textLength="26" lengthAdjust="spacingAndGlyphs">-25KA5</text><text x="595.00" y="261.6" font-family="Liberation Sans" font-weight="bold" font-size="5.6" fill="#3a3a3a" text-anchor="middle" textLength="45" lengthAdjust="spacingAndGlyphs">Digital Ausgang</text><text x="592.50" y="309.5" font-family="Liberation Sans" font-size="3.5" fill="#606060" text-anchor="middle">01</text><line x1="557.90" y1="262.9" x2="632.30" y2="262.9" stroke="#4a4a4a" stroke-width="1.1"/><line x1="557.90" y1="279.8" x2="632.30" y2="279.8" stroke="#2a2a2a" stroke-width="1.7"/><line x1="559.90" y1="287.8" x2="630.30" y2="287.8" stroke="#a8a8a8" stroke-width="0.9"/><line x1="557.90" y1="255.7" x2="557.90" y2="303.3" stroke="#4a4a4a" stroke-width="1.1"/><rect x="260.3" y="255.7" width="372.00" height="47.6" rx="2.5" fill="none" stroke="#4a4a4a" stroke-width="1.1"/><line x1="258" y1="362.9" x2="631" y2="362.9" stroke="#9a4a5a" stroke-width="1.1"/><circle cx="260.5" cy="359" r="0.9" fill="#555"/><circle cx="628.5" cy="359" r="0.9" fill="#555"/><line x1="297.80" y1="303.3" x2="297.80" y2="362.9" stroke="#606060" stroke-width="1.05"/><line x1="297.80" y1="362.9" x2="297.80" y2="425.7" stroke="#626262" stroke-width="1.1"/><line x1="324.50" y1="362.9" x2="324.50" y2="425.7" stroke="#626262" stroke-width="1.1"/><line x1="297.80" y1="425.7" x2="297.80" y2="489.6" stroke="#765a62" stroke-width="1.05"/><line x1="324.50" y1="425.7" x2="324.50" y2="489.6" stroke="#765a62" stroke-width="1.05"/><line x1="297.80" y1="489.6" x2="324.50" y2="489.6" stroke="#505050" stroke-width="1.05"/><circle cx="297.80" cy="389" r="1.8" fill="#e0e0e0" stroke="#505050" stroke-width="1.2"/><text x="300.80" y="394" font-family="Liberation Sans" font-size="3.8" fill="#606060">o</text><text x="295.80" y="423.5" font-family="Liberation Sans" font-size="4.5" fill="#e090a8">1</text><circle cx="297.80" cy="425.7" r="1.3" fill="#9a5068"/><circle cx="324.50" cy="389" r="1.8" fill="#e0e0e0" stroke="#505050" stroke-width="1.2"/><text x="327.50" y="394" font-family="Liberation Sans" font-size="3.8" fill="#606060">o</text><text x="322.50" y="423.5" font-family="Liberation Sans" font-size="4.5" fill="#e090a8">1</text><circle cx="324.50" cy="425.7" r="1.3" fill="#9a5068"/><text x="294.30" y="387.2" font-family="Liberation Sans" font-size="8" fill="#1e1e1e" stroke="#1e1e1e" stroke-width="0.4" text-anchor="end" textLength="21" lengthAdjust="spacingAndGlyphs">-25X1</text><line x1="290.80" y1="425.7" x2="339.50" y2="425.7" stroke="#555" stroke-width="1.1"/><text x="293.80" y="426.5" font-family="Liberation Sans" font-size="8" fill="#1e1e1e" stroke="#1e1e1e" stroke-width="0.4" text-anchor="end" textLength="21" lengthAdjust="spacingAndGlyphs">-25W6</text><rect x="292.20" y="462.6" width="11.3" height="6" rx="1.2" fill="#fff" stroke="#3a3a3a" stroke-width="1.3"/><text x="293.30" y="459" font-family="Liberation Sans" font-size="3.5" fill="#707070">A1</text><text x="293.30" y="475" font-family="Liberation Sans" font-size="3.8" fill="#d05070">A2</text><path d="M308.60 458.5L311.10 462L308.60 465.8L311.10 469.3L308.60 472.8L306.10 469.3L308.60 465.8L306.10 462Z" fill="none" stroke="#3a3a3a" stroke-width="1.2"/><text x="291.80" y="464.3" font-family="Liberation Sans" font-size="8" fill="#1e1e1e" stroke="#1e1e1e" stroke-width="0.4" text-anchor="end" textLength="21" lengthAdjust="spacingAndGlyphs">-25M1</text><line x1="372.10" y1="303.3" x2="372.10" y2="362.9" stroke="#606060" stroke-width="1.05"/><line x1="372.10" y1="362.9" x2="372.10" y2="425.7" stroke="#626262" stroke-width="1.1"/><line x1="398.80" y1="362.9" x2="398.80" y2="425.7" stroke="#626262" stroke-width="1.1"/><line x1="372.10" y1="425.7" x2="372.10" y2="489.6" stroke="#765a62" stroke-width="1.05"/><line x1="398.80" y1="425.7" x2="398.80" y2="489.6" stroke="#765a62" stroke-width="1.05"/><line x1="372.10" y1="489.6" x2="398.80" y2="489.6" stroke="#505050" stroke-width="1.05"/><circle cx="372.10" cy="389" r="1.8" fill="#e0e0e0" stroke="#505050" stroke-width="1.2"/><text x="375.10" y="394" font-family="Liberation Sans" font-size="3.8" fill="#606060">o</text><text x="370.10" y="423.5" font-family="Liberation Sans" font-size="4.5" fill="#e090a8">1</text><circle cx="372.10" cy="425.7" r="1.3" fill="#9a5068"/><circle cx="398.80" cy="389" r="1.8" fill="#e0e0e0" stroke="#505050" stroke-width="1.2"/><text x="401.80" y="394" font-family="Liberation Sans" font-size="3.8" fill="#606060">o</text><text x="396.80" y="423.5" font-family="Liberation Sans" font-size="4.5" fill="#e090a8">1</text><circle cx="398.80" cy="425.7" r="1.3" fill="#9a5068"/><text x="368.60" y="387.2" font-family="Liberation Sans" font-size="8" fill="#1e1e1e" stroke="#1e1e1e" stroke-width="0.4" text-anchor="end" textLength="21" lengthAdjust="spacingAndGlyphs">-25X2</text><line x1="365.10" y1="425.7" x2="413.80" y2="425.7" stroke="#555" stroke-width="1.1"/><text x="368.10" y="426.5" font-family="Liberation Sans" font-size="8" fill="#1e1e1e" stroke="#1e1e1e" stroke-width="0.4" text-anchor="end" textLength="21" lengthAdjust="spacingAndGlyphs">-25W7</text><rect x="366.50" y="462.6" width="11.3" height="6" rx="1.2" fill="#fff" stroke="#3a3a3a" stroke-width="1.3"/><text x="367.60" y="459" font-family="Liberation Sans" font-size="3.5" fill="#707070">A1</text><text x="367.60" y="475" font-family="Liberation Sans" font-size="3.8" fill="#d05070">A2</text><path d="M382.90 458.5L385.40 462L382.90 465.8L385.40 469.3L382.90 472.8L380.40 469.3L382.90 465.8L380.40 462Z" fill="none" stroke="#3a3a3a" stroke-width="1.2"/><text x="366.10" y="464.3" font-family="Liberation Sans" font-size="8" fill="#1e1e1e" stroke="#1e1e1e" stroke-width="0.4" text-anchor="end" textLength="21" lengthAdjust="spacingAndGlyphs">-25M2</text><line x1="446.40" y1="303.3" x2="446.40" y2="362.9" stroke="#606060" stroke-width="1.05"/><line x1="446.40" y1="362.9" x2="446.40" y2="425.7" stroke="#626262" stroke-width="1.1"/><line x1="473.10" y1="362.9" x2="473.10" y2="425.7" stroke="#626262" stroke-width="1.1"/><line x1="446.40" y1="425.7" x2="446.40" y2="489.6" stroke="#765a62" stroke-width="1.05"/><line x1="473.10" y1="425.7" x2="473.10" y2="489.6" stroke="#765a62" stroke-width="1.05"/><line x1="446.40" y1="489.6" x2="473.10" y2="489.6" stroke="#505050" stroke-width="1.05"/><circle cx="446.40" cy="389" r="1.8" fill="#e0e0e0" stroke="#505050" stroke-width="1.2"/><text x="449.40" y="394" font-family="Liberation Sans" font-size="3.8" fill="#606060">o</text><text x="444.40" y="423.5" font-family="Liberation Sans" font-size="4.5" fill="#e090a8">1</text><circle cx="446.40" cy="425.7" r="1.3" fill="#9a5068"/><circle cx="473.10" cy="389" r="1.8" fill="#e0e0e0" stroke="#505050" stroke-width="1.2"/><text x="476.10" y="394" font-family="Liberation Sans" font-size="3.8" fill="#606060">o</text><text x="471.10" y="423.5" font-family="Liberation Sans" font-size="4.5" fill="#e090a8">1</text><circle cx="473.10" cy="425.7" r="1.3" fill="#9a5068"/><text x="442.90" y="387.2" font-family="Liberation Sans" font-size="8" fill="#1e1e1e" stroke="#1e1e1e" stroke-width="0.4" text-anchor="end" textLength="21" lengthAdjust="spacingAndGlyphs">-25X3</text><line x1="439.40" y1="425.7" x2="488.10" y2="425.7" stroke="#555" stroke-width="1.1"/><text x="442.40" y="426.5" font-family="Liberation Sans" font-size="8" fill="#1e1e1e" stroke="#1e1e1e" stroke-width="0.4" text-anchor="end" textLength="21" lengthAdjust="spacingAndGlyphs">-25W8</text><rect x="440.80" y="462.6" width="11.3" height="6" rx="1.2" fill="#fff" stroke="#3a3a3a" stroke-width="1.3"/><text x="441.90" y="459" font-family="Liberation Sans" font-size="3.5" fill="#707070">A1</text><text x="441.90" y="475" font-family="Liberation Sans" font-size="3.8" fill="#d05070">A2</text><path d="M457.20 458.5L459.70 462L457.20 465.8L459.70 469.3L457.20 472.8L454.70 469.3L457.20 465.8L454.70 462Z" fill="none" stroke="#3a3a3a" stroke-width="1.2"/><text x="440.40" y="464.3" font-family="Liberation Sans" font-size="8" fill="#1e1e1e" stroke="#1e1e1e" stroke-width="0.4" text-anchor="end" textLength="21" lengthAdjust="spacingAndGlyphs">-25M3</text><line x1="520.70" y1="303.3" x2="520.70" y2="362.9" stroke="#606060" stroke-width="1.05"/><line x1="520.70" y1="362.9" x2="520.70" y2="425.7" stroke="#626262" stroke-width="1.1"/><line x1="547.40" y1="362.9" x2="547.40" y2="425.7" stroke="#626262" stroke-width="1.1"/><line x1="520.70" y1="425.7" x2="520.70" y2="489.6" stroke="#765a62" stroke-width="1.05"/><line x1="547.40" y1="425.7" x2="547.40" y2="489.6" stroke="#765a62" stroke-width="1.05"/><line x1="520.70" y1="489.6" x2="547.40" y2="489.6" stroke="#505050" stroke-width="1.05"/><circle cx="520.70" cy="389" r="1.8" fill="#e0e0e0" stroke="#505050" stroke-width="1.2"/><text x="523.70" y="394" font-family="Liberation Sans" font-size="3.8" fill="#606060">o</text><text x="518.70" y="423.5" font-family="Liberation Sans" font-size="4.5" fill="#e090a8">1</text><circle cx="520.70" cy="425.7" r="1.3" fill="#9a5068"/><circle cx="547.40" cy="389" r="1.8" fill="#e0e0e0" stroke="#505050" stroke-width="1.2"/><text x="550.40" y="394" font-family="Liberation Sans" font-size="3.8" fill="#606060">o</text><text x="545.40" y="423.5" font-family="Liberation Sans" font-size="4.5" fill="#e090a8">1</text><circle cx="547.40" cy="425.7" r="1.3" fill="#9a5068"/><text x="517.20" y="387.2" font-family="Liberation Sans" font-size="8" fill="#1e1e1e" stroke="#1e1e1e" stroke-width="0.4" text-anchor="end" textLength="21" lengthAdjust="spacingAndGlyphs">-25X4</text><line x1="513.70" y1="425.7" x2="562.40" y2="425.7" stroke="#555" stroke-width="1.1"/><text x="516.70" y="426.5" font-family="Liberation Sans" font-size="8" fill="#1e1e1e" stroke="#1e1e1e" stroke-width="0.4" text-anchor="end" textLength="21" lengthAdjust="spacingAndGlyphs">-25W9</text><rect x="515.10" y="462.6" width="11.3" height="6" rx="1.2" fill="#fff" stroke="#3a3a3a" stroke-width="1.3"/><text x="516.20" y="459" font-family="Liberation Sans" font-size="3.5" fill="#707070">A1</text><text x="516.20" y="475" font-family="Liberation Sans" font-size="3.8" fill="#d05070">A2</text><path d="M531.50 458.5L534.00 462L531.50 465.8L534.00 469.3L531.50 472.8L529.00 469.3L531.50 465.8L529.00 462Z" fill="none" stroke="#3a3a3a" stroke-width="1.2"/><text x="514.70" y="464.3" font-family="Liberation Sans" font-size="8" fill="#1e1e1e" stroke="#1e1e1e" stroke-width="0.4" text-anchor="end" textLength="21" lengthAdjust="spacingAndGlyphs">-25M4</text><line x1="595.00" y1="303.3" x2="595.00" y2="362.9" stroke="#606060" stroke-width="1.05"/><line x1="595.00" y1="362.9" x2="595.00" y2="425.7" stroke="#626262" stroke-width="1.1"/><line x1="621.70" y1="362.9" x2="621.70" y2="425.7" stroke="#626262" stroke-width="1.1"/><line x1="595.00" y1="425.7" x2="595.00" y2="489.6" stroke="#765a62" stroke-width="1.05"/><line x1="621.70" y1="425.7" x2="621.70" y2="489.6" stroke="#765a62" stroke-width="1.05"/><line x1="595.00" y1="489.6" x2="621.70" y2="489.6" stroke="#505050" stroke-width="1.05"/><circle cx="595.00" cy="389" r="1.8" fill="#e0e0e0" stroke="#505050" stroke-width="1.2"/><text x="598.00" y="394" font-family="Liberation Sans" font-size="3.8" fill="#606060">o</text><text x="593.00" y="423.5" font-family="Liberation Sans" font-size="4.5" fill="#e090a8">1</text><circle cx="595.00" cy="425.7" r="1.3" fill="#9a5068"/><circle cx="621.70" cy="389" r="1.8" fill="#e0e0e0" stroke="#505050" stroke-width="1.2"/><text x="624.70" y="394" font-family="Liberation Sans" font-size="3.8" fill="#606060">o</text><text x="619.70" y="423.5" font-family="Liberation Sans" font-size="4.5" fill="#e090a8">1</text><circle cx="621.70" cy="425.7" r="1.3" fill="#9a5068"/><text x="591.50" y="387.2" font-family="Liberation Sans" font-size="8" fill="#1e1e1e" stroke="#1e1e1e" stroke-width="0.4" text-anchor="end" textLength="21" lengthAdjust="spacingAndGlyphs">-25X5</text><line x1="588.00" y1="425.7" x2="636.70" y2="425.7" stroke="#555" stroke-width="1.1"/><text x="591.00" y="426.5" font-family="Liberation Sans" font-size="8" fill="#1e1e1e" stroke="#1e1e1e" stroke-width="0.4" text-anchor="end" textLength="25" lengthAdjust="spacingAndGlyphs">-25W10</text><rect x="589.40" y="462.6" width="11.3" height="6" rx="1.2" fill="#fff" stroke="#3a3a3a" stroke-width="1.3"/><text x="590.50" y="459" font-family="Liberation Sans" font-size="3.5" fill="#707070">A1</text><text x="590.50" y="475" font-family="Liberation Sans" font-size="3.8" fill="#d05070">A2</text><path d="M605.80 458.5L608.30 462L605.80 465.8L608.30 469.3L605.80 472.8L603.30 469.3L605.80 465.8L603.30 462Z" fill="none" stroke="#3a3a3a" stroke-width="1.2"/><text x="589.00" y="464.3" font-family="Liberation Sans" font-size="8" fill="#1e1e1e" stroke="#1e1e1e" stroke-width="0.4" text-anchor="end" textLength="21" lengthAdjust="spacingAndGlyphs">-25M5</text><text x="232" y="541.5" font-family="Liberation Sans" font-size="4.5" fill="#505050">von 24</text><text x="787" y="541.5" font-family="Liberation Sans" font-size="4.5" fill="#505050">nach 25</text><line x1="225.5" y1="547.6" x2="840.5" y2="547.6" stroke="#3a3a3a" stroke-width="1.2"/><line x1="225.5" y1="556" x2="407" y2="556" stroke="#3a3a3a" stroke-width="1.1"/><line x1="225.5" y1="563.3" x2="407" y2="563.3" stroke="#3a3a3a" stroke-width="1.1"/><line x1="225.5" y1="571.2" x2="407" y2="571.2" stroke="#3a3a3a" stroke-width="1.1"/><line x1="252.2" y1="547.6" x2="252.2" y2="579.5" stroke="#3a3a3a" stroke-width="1.1"/><line x1="294.2" y1="547.6" x2="294.2" y2="579.5" stroke="#3a3a3a" stroke-width="1.1"/><line x1="315.2" y1="547.6" x2="315.2" y2="579.5" stroke="#3a3a3a" stroke-width="1.1"/><line x1="331" y1="547.6" x2="331" y2="579.5" stroke="#3a3a3a" stroke-width="1.1"/><line x1="359.5" y1="547.6" x2="359.5" y2="579.5" stroke="#3a3a3a" stroke-width="1.1"/><line x1="407" y1="547.6" x2="407" y2="579.5" stroke="#3a3a3a" stroke-width="1.1"/><line x1="492.6" y1="547.6" x2="492.6" y2="579.5" stroke="#3a3a3a" stroke-width="1.1"/><line x1="575.2" y1="547.6" x2="575.2" y2="579.5" stroke="#3a3a3a" stroke-width="1.1"/><line x1="655" y1="547.6" x2="655" y2="579.5" stroke="#3a3a3a" stroke-width="1.1"/><line x1="655" y1="563.3" x2="840.5" y2="563.3" stroke="#3a3a3a" stroke-width="1.1"/><line x1="729.2" y1="547.6" x2="729.2" y2="563.3" stroke="#3a3a3a" stroke-width="1.1"/><line x1="765.8" y1="547.6" x2="765.8" y2="563.3" stroke="#3a3a3a" stroke-width="1.1"/><line x1="729.2" y1="555.8" x2="840.5" y2="555.8" stroke="#3a3a3a" stroke-width="1.1"/><line x1="747.5" y1="563.3" x2="747.5" y2="579.5" stroke="#3a3a3a" stroke-width="1.1"/><line x1="801.7" y1="563.3" x2="801.7" y2="579.5" stroke="#3a3a3a" stroke-width="1.1"/><line x1="801.7" y1="571.7" x2="840.5" y2="571.7" stroke="#3a3a3a" stroke-width="1.1"/><text x="239" y="577.5" font-family="Liberation Mono" font-size="4.8" fill="#2e2e2e" text-anchor="middle" textLength="23" lengthAdjust="spacingAndGlyphs">Zustand</text><text x="273.2" y="577.5" font-family="Liberation Mono" font-size="4.8" fill="#2e2e2e" text-anchor="middle" textLength="23" lengthAdjust="spacingAndGlyphs">Änderung</text><text x="304.7" y="577.5" font-family="Liberation Mono" font-size="4.8" fill="#2e2e2e" text-anchor="middle" textLength="16" lengthAdjust="spacingAndGlyphs">Datum</text><text x="323" y="577.5" font-family="Liberation Mono" font-size="4.8" fill="#2e2e2e" text-anchor="middle" textLength="13" lengthAdjust="spacingAndGlyphs">Name</text><text x="333" y="553.5" font-family="Liberation Mono" font-size="4.8" fill="#2e2e2e" text-anchor="start" textLength="17" lengthAdjust="spacingAndGlyphs">Datum</text><text x="333" y="561" font-family="Liberation Mono" font-size="4.8" fill="#2e2e2e" text-anchor="start" textLength="17" lengthAdjust="spacingAndGlyphs">Bearb.</text><text x="333" y="569" font-family="Liberation Mono" font-size="4.8" fill="#2e2e2e" text-anchor="start" textLength="16" lengthAdjust="spacingAndGlyphs">Gepr.</text><text x="333" y="577" font-family="Liberation Mono" font-size="4.8" fill="#2e2e2e" text-anchor="start" textLength="15" lengthAdjust="spacingAndGlyphs">Norm</text><text x="362" y="553.5" font-family="Liberation Mono" font-size="4.8" fill="#2e2e2e" text-anchor="start" textLength="24" lengthAdjust="spacingAndGlyphs">13.04.22</text><text x="362" y="561" font-family="Liberation Mono" font-size="4.8" fill="#2e2e2e" text-anchor="start" textLength="15" lengthAdjust="spacingAndGlyphs">Bosch</text><text x="362" y="577" font-family="Liberation Mono" font-size="4.8" fill="#2e2e2e" text-anchor="start" textLength="25" lengthAdjust="spacingAndGlyphs">DIN 81346</text><text x="409" y="553.5" font-family="Liberation Mono" font-size="4.8" fill="#2e2e2e" text-anchor="start" textLength="35" lengthAdjust="spacingAndGlyphs">DEMO Projekt</text><text x="657" y="552.5" font-family="Liberation Mono" font-size="4.8" fill="#2e2e2e" text-anchor="start" textLength="34" lengthAdjust="spacingAndGlyphs">Projekt-Nummer</text><text x="731" y="552.5" font-family="Liberation Mono" font-size="4.8" fill="#2e2e2e" text-anchor="start" textLength="16" lengthAdjust="spacingAndGlyphs">Anlage</text><text x="769" y="554" font-family="Liberation Mono" font-size="4" fill="#2e2e2e" text-anchor="start" textLength="9" lengthAdjust="spacingAndGlyphs">=A1</text><text x="731" y="561" font-family="Liberation Mono" font-size="4.8" fill="#2e2e2e" text-anchor="start" textLength="9" lengthAdjust="spacingAndGlyphs">Ort</text><text x="769" y="562" font-family="Liberation Mono" font-size="4" fill="#2e2e2e" text-anchor="start" textLength="9" lengthAdjust="spacingAndGlyphs">+ST</text><text x="657" y="568.5" font-family="Liberation Mono" font-size="4.8" fill="#2e2e2e" text-anchor="start" textLength="40" lengthAdjust="spacingAndGlyphs">Zeichnungsnummer</text><text x="657" y="577" font-family="Liberation Mono" font-size="4.8" fill="#2e2e2e" text-anchor="start" textLength="20" lengthAdjust="spacingAndGlyphs">AS/2022</text><text x="751" y="576" font-family="Liberation Mono" font-size="4.8" fill="#2e2e2e" text-anchor="start" textLength="13" lengthAdjust="spacingAndGlyphs">4EFS</text><text x="804" y="569.5" font-family="Liberation Mono" font-size="4.8" fill="#2e2e2e" text-anchor="start" textLength="12" lengthAdjust="spacingAndGlyphs">Blatt</text><text x="838" y="569.5" font-family="Liberation Mono" font-size="4.8" fill="#2e2e2e" text-anchor="end" textLength="6" lengthAdjust="spacingAndGlyphs">25</text><text x="804" y="577.5" font-family="Liberation Mono" font-size="4.8" fill="#2e2e2e" text-anchor="start" textLength="8" lengthAdjust="spacingAndGlyphs">von</text><text x="838" y="577.5" font-family="Liberation Mono" font-size="4.8" fill="#2e2e2e" text-anchor="end" textLength="9" lengthAdjust="spacingAndGlyphs">104</text><defs><linearGradient id="wg" x1="0" y1="0" x2="1" y2="0"><stop offset="0" stop-color="#f0f0a0" stop-opacity="0.2"/><stop offset="0.35" stop-color="#e4e440"/><stop offset="1" stop-color="#e8e860"/></linearGradient><linearGradient id="cg" x1="0" y1="0" x2="0" y2="1"><stop offset="0" stop-color="#8a8a90"/><stop offset="0.6" stop-color="#151515"/></linearGradient></defs><text x="495" y="557.5" font-family="Liberation Sans" font-weight="bold" font-size="6" fill="#555" textLength="9" lengthAdjust="spacingAndGlyphs">WS</text><path d="M531 554.8H518.5L513.5 565.8H531" fill="none" stroke="url(#cg)" stroke-width="2.6" stroke-linejoin="round"/><path d="M533.5 566.5L542.5 554L549.5 566.5" fill="none" stroke="#141414" stroke-width="2.8" stroke-linejoin="round"/><path d="M553 554.8H567Q571.2 554.8 571.2 558.5V562Q571.2 565.8 567 565.8H551" fill="none" stroke="url(#cg)" stroke-width="2.6"/><rect x="497.5" y="559" width="70.5" height="3.4" fill="url(#wg)"/><text x="512.5" y="574.6" font-family="Liberation Sans" font-size="3.8" fill="#666" textLength="55.5" lengthAdjust="spacingAndGlyphs">a EPLAN company</text></svg>
<svg style="left:860px;top:48px" width="14" height="14"><path d="M5.5 1.5Q6.2 5.2 9.5 6Q6.2 6.8 5.5 10.5Q4.8 6.8 1.5 6Q4.8 5.2 5.5 1.5Z" fill="#f2d820"/><circle cx="10.5" cy="10.5" r="1.6" fill="#f2d820"/><circle cx="10.5" cy="2.8" r="0.7" fill="#c8d0d4"/></svg>
<svg style="left:1134px;top:49px" width="46" height="12"><path d="M3 4L6 7L9 4" fill="none" stroke="#d0d6da" stroke-width="1.1"/><path d="M22 1.5V5.5M20.5 5.5H23.5L23 7H21ZM22 7V10.5" fill="#c0c8cc" stroke="#c0c8cc" stroke-width="0.9"/><path d="M36 2L42 8M42 2L36 8" stroke="#e4e8ea" stroke-width="1.2"/></svg>
<div class="a" style="left:1105.5px;top:70px;width:62px;height:14px;background:#f5d800;border-radius:7px;border:1px solid #2a2200"></div>
<div class="a" style="left:913.5px;top:90px;width:256.5px;height:27px;background:#122029;border:1px solid #2e3e48;border-radius:4px"></div>
<div class="a" style="left:1122px;top:97px;width:28px;height:13px;background:#0e1820;border:1px solid #2a4070;border-radius:2px"></div>
<div class="a" style="left:862px;top:606.5px;width:314px;height:27px;background:#28363f;"></div>
<div class="a" style="left:862.5px;top:609px;width:35px;height:22px;background:#384752;"></div>
<svg style="left:869px;top:613px" width="14" height="14"><circle cx="7" cy="7" r="5.2" fill="#1a9ad0"/><path d="M4.5 5.5Q7 3.2 9.5 5.5M4.5 8.5Q7 10.8 9.5 8.5" fill="none" stroke="#0d5a80" stroke-width="1"/></svg>
<div class="a" style="left:901px;top:609px;width:237px;height:22px;background:#2b3a44;border:1px solid #5a707e"></div>
<div class="a" style="left:987.5px;top:612.5px;width:32.5px;height:14px;background:#1e2d38;border:1px solid #2e4656"></div>
<div class="a" style="left:1031.5px;top:614px;width:0.8px;height:12px;background:#e8ecee;"></div>
<svg style="left:1149px;top:611px" width="18" height="18"><circle cx="9" cy="9" r="8" fill="#f5d800"/><path d="M9 4L13.5 12.5H4.5Z" fill="#2a2a1a"/><path d="M9 7.5L11 11H7Z" fill="#f5d800"/></svg>
<div class="t" style="left:1186px;top:49px;height:57px;font-size:8px;color:#d0d6da;writing-mode:vertical-rl;transform:rotate(180deg) scaleY(0.93);transform-origin:50% 50%">Material-Explorer</div>
<svg style="left:1186px;top:107px" width="9" height="8"><rect x="1" y="1" width="6" height="6" fill="none" stroke="#b0b8bc" stroke-width="0.9"/></svg>
<div class="t" style="left:1186px;top:122.5px;height:50px;font-size:8px;color:#d0d6da;writing-mode:vertical-rl;transform:rotate(180deg) scaleY(0.86);transform-origin:50% 50%">Symbol-Explorer</div>
<svg style="left:1186px;top:176px" width="9" height="8"><rect x="1" y="1" width="6" height="6" fill="none" stroke="#b0b8bc" stroke-width="0.9"/></svg>
<div class="t" style="left:72.00px;top:7.14px;font-size:8.5px;color:#eef1f3;transform:scaleX(0.9072);">Projekt</div>
<div class="t" style="left:104.00px;top:7.14px;font-size:8.5px;color:#eef1f3;transform:scaleX(0.8567);">Datei</div>
<div class="t" style="left:129.50px;top:7.14px;font-size:8.5px;color:#eef1f3;transform:scaleX(0.8791);">Einfügen</div>
<div class="t" style="left:167.50px;top:7.14px;font-size:8.5px;color:#eef1f3;transform:scaleX(0.8939);">Ändern</div>
<div class="t" style="left:200.00px;top:7.14px;font-size:8.5px;color:#eef1f3;transform:scaleX(0.8756);">Bearbeiten</div>
<div class="t" style="left:245.00px;top:7.14px;font-size:8.5px;color:#eef1f3;transform:scaleX(0.9036);">Verwaltung</div>
<div class="t" style="left:292.00px;top:7.14px;font-size:8.5px;color:#eef1f3;transform:scaleX(0.9000);">Schnittstellen</div>
<div class="t" style="left:346.00px;top:7.14px;font-size:8.5px;color:#eef1f3;transform:scaleX(0.9134);">Auswertung</div>
<div class="t" style="left:395.50px;top:7.14px;font-size:8.5px;color:#eef1f3;transform:scaleX(0.9328);">Ansicht</div>
<div class="t" style="left:429.50px;top:7.14px;font-size:8.5px;color:#eef1f3;transform:scaleX(0.8510);">Extras</div>
<div class="t" style="left:458.80px;top:7.14px;font-size:8.5px;color:#eef1f3;transform:scaleX(0.8556);">Add-Ons</div>
<div class="t" style="left:496.20px;top:7.14px;font-size:8.5px;color:#eef1f3;transform:scaleX(0.7952);">PRO.FILE</div>
<div class="t" style="left:536.20px;top:7.14px;font-size:8.5px;color:#eef1f3;transform:scaleX(0.8676);">Fenster</div>
<div class="t" style="left:569.50px;top:7.14px;font-size:8.5px;color:#eef1f3;transform:scaleX(0.9589);">Konto</div>
<div class="t" style="left:598.20px;top:7.14px;font-size:8.5px;color:#eef1f3;transform:scaleX(0.8467);">AI</div>
<div class="t" style="left:613.00px;top:7.14px;font-size:8.5px;color:#eef1f3;transform:scaleX(0.9704);">Hilfe</div>
<div class="t" style="left:652.00px;top:7.33px;font-size:8.5px;color:#d0d6da;transform:scaleX(0.8748);">Suchen (Strg+Q)</div>
<div class="t" style="left:719.50px;top:7.33px;font-size:8.5px;color:#e6eaed;transform:scaleX(0.8858);">Projekt: DEMO Projekt [ 7.4.0.8 (24.10.2025) ]</div>
<div class="t" style="left:7.00px;top:661.58px;font-size:8px;color:#d8dde0;transform:scaleX(0.8802);">Fertig</div>
<div class="t" style="left:1011.50px;top:661.58px;font-size:8px;color:#d8dde0;transform:scaleX(0.8797);">191%</div>
<div class="t" style="left:1073.00px;top:661.58px;font-size:8px;color:#d8dde0;transform:scaleX(0.9969);">292,87/100,57</div>
<div class="t" style="left:1139.00px;top:661.58px;font-size:8px;color:#d8dde0;transform:scaleX(0.9155);">8  DIN A4  1:1</div>
<div class="t" style="left:27.40px;top:50.78px;font-size:8px;color:#e8ecee;transform:scaleX(0.8474);">Projekt-Explorer</div>
<div class="t" style="left:28.30px;top:92.48px;font-size:8px;color:#5e6d77;transform:scaleX(0.8613);">Suchbegriff eingeben</div>
<div class="t" style="left:34.00px;top:645.58px;font-size:8px;color:#e6eaed;transform:scaleX(0.8544);">Projekt-Explorer</div>
<div class="t" style="left:100.80px;top:645.58px;font-size:8px;color:#e0e4e7;transform:scaleX(0.8816);">Eigenschaften</div>
<div class="t" style="left:236.00px;top:53.04px;font-size:8.5px;color:#f2f4f6;font-weight:bold;transform:scaleX(0.8466);">=A1+ST_Plan.0025.wsELD</div>
<div class="t" style="left:880.30px;top:50.78px;font-size:8px;color:#e4e8eb;transform:scaleX(0.8650);">AI Copilot (beta)</div>
<div class="t" style="left:1111.50px;top:73.03px;font-size:8.5px;color:#2e2600;font-weight:bold;transform:scaleX(0.9046);">Neues Thema</div>
<div class="t" style="left:1060.00px;top:99.88px;font-size:8px;color:#eef1f3;transform:scaleX(0.8595);">platziere das Makro</div>
<div class="t" style="left:1127.00px;top:99.88px;font-size:8px;color:#ffffff;font-weight:bold;transform:scaleX(0.8435);">Ventil</div>
<div class="t" style="left:1152.00px;top:99.88px;font-size:8px;color:#eef1f3;transform:scaleX(0.9468);">5x</div>
<div class="t" style="left:866.30px;top:592.54px;font-size:8.5px;color:#8a969d;font-style:italic;transform:scaleX(0.9320);">Bearbeitung läuft...</div>
<div class="t" style="left:909.00px;top:615.84px;font-size:8.5px;color:#e8ecee;transform:scaleX(1.0381);">platziere das Makro</div>
<div class="t" style="left:992.70px;top:615.63px;font-size:8.5px;color:#ffffff;font-weight:bold;transform:scaleX(0.9703);">Ventil</div>
<div class="t" style="left:1023.00px;top:615.84px;font-size:8.5px;color:#e8ecee;transform:scaleX(0.8911);">5x</div>
<div class="t" style="left:907.70px;top:644.13px;font-size:8.5px;color:#7e8a92;font-style:italic;transform:scaleX(0.9205);">Ich bin eine AI und kann Fehler machen. Ergebnisse überprüfen.</div>
</body></html>
